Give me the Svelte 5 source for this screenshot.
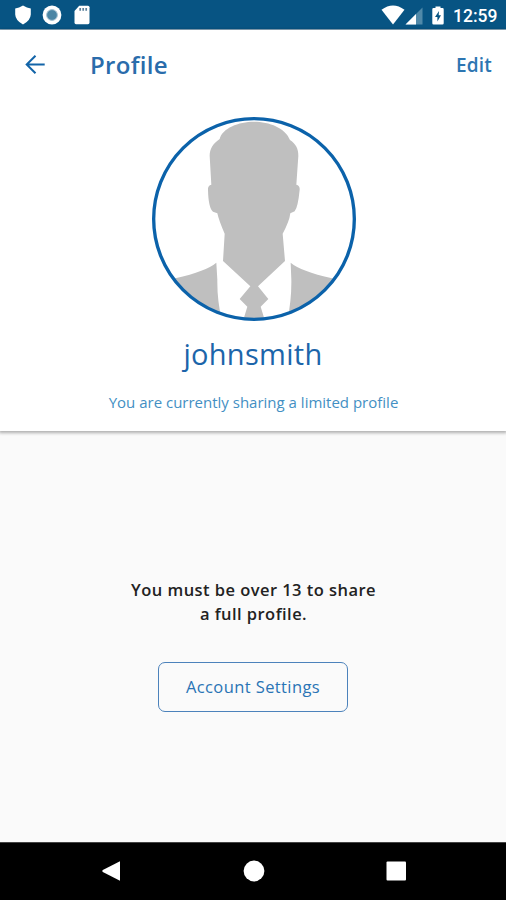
<script lang="ts">
  let username = 'johnsmith';
  let minAge = 13;
</script>

<div class="screen">
  <!-- Status bar -->
  <div class="status-bar">
    <svg class="shield" width="18" height="20" viewBox="0 0 18 20">
      <path d="M9 .5 Q13 3 16.8 3.4 V9.5 Q16.5 15.5 9 19.5 Q1.5 15.5 1.2 9.5 V3.4 Q5 3 9 .5Z" fill="#fff" />
    </svg>
    <svg class="sync" width="20" height="20" viewBox="0 0 20 20">
      <circle cx="10" cy="10" r="9.4" fill="#fff" />
      <circle cx="10" cy="10" r="5.4" fill="#4b86a5" stroke="#a5c2d2" stroke-width="1" />
    </svg>
    <svg class="sd-card" width="16" height="20" viewBox="0 0 16 20">
      <path d="M5.2 .8 H14 Q15.5 .8 15.5 2.3 V17.5 Q15.5 19.2 14 19.2 H2 Q.5 19.2 .5 17.5 V6Z" fill="#fff" />
      <path d="M6.2 3V5.8M9.2 3V5.8M12.2 3V5.8" stroke="#5b819b" stroke-width="1.7" />
    </svg>
    <svg class="wifi" width="24" height="20" viewBox="0 0 24 20">
      <path d="M.5 4.8 Q12 -3.7 23.5 4.8 L12 19.5Z" fill="#fff" />
    </svg>
    <svg class="signal" width="18" height="18" viewBox="0 0 18 18">
      <path d="M17.5 .5V17.5H.5Z" fill="#5089a9" />
      <path d="M11 7V17.5H.5Z" fill="#fff" />
    </svg>
    <svg class="battery" width="12" height="19" viewBox="0 0 12 19">
      <path d="M3.5 .5H8.5V2H10.5Q11.7 2 11.7 3.2V17.3Q11.7 18.5 10.5 18.5H1.5Q.3 18.5 .3 17.3V3.2Q.3 2 1.5 2H3.5Z" fill="#fff" />
      <path d="M7 5L3 11H5.4V15.5L9 9.3H6.7Z" fill="#075483" />
    </svg>
    <span class="clock">12:59</span>
  </div>

  <!-- Profile card -->
  <div class="card">
    <header class="toolbar">
      <button class="back" aria-label="Back">
        <svg width="22" height="22" viewBox="0 0 22 22">
          <path d="M20.7 10.5H3M11.5 1.7L2.7 10.5L11.5 19.3" fill="none" stroke="#1264a8" stroke-width="2" />
        </svg>
      </button>
      <h1>Profile</h1>
      <button class="edit">Edit</button>
    </header>

    <svg class="avatar" width="206" height="206" viewBox="23 19 618 618">
      <defs>
        <clipPath id="avatar-clip"><circle cx="332" cy="328" r="303" /></clipPath>
      </defs>
      <circle cx="332" cy="328" r="303" fill="#fff" />
      <g clip-path="url(#avatar-clip)" fill="#bfbfbf">
        <path d="M332 36C286 36 236 56 229 88C210 101 199 117 199 139L204 225Q193 227 194 240Q195 294 209 306L222 311Q227 334 244 372L239 454L321 530L289 568L312 591L294 650H370L352 591L375 568L344 530L425 454L418 372Q438 336 441 311L454 305Q464 292 469 240Q470 228 459 225L465 139C465 117 458 103 440 91C427 55 378 36 332 36Z" />
        <path d="M219 459Q190 484 96 506L20 530V650H240Q221 580 222 510Z" />
        <path d="M442 459Q471 484 566 506L645 530V650H428Q445 580 444 510Z" />
      </g>
      <circle cx="332" cy="328" r="301" fill="none" stroke="#0b62aa" stroke-width="10" />
    </svg>

    <div class="username">{username}</div>
    <div class="sharing">You are currently sharing a limited profile</div>
  </div>

  <!-- Age notice -->
  <main class="content">
    <p class="notice">You must be over {minAge} to share<br />a full profile.</p>
    <button class="settings">Account Settings</button>
  </main>

  <!-- System navigation -->
  <nav class="nav-bar">
    <svg width="22" height="22" viewBox="0 0 22 22">
      <path d="M19 1.2V20.8L1.8 12Q.6 11 1.8 10Z" fill="#fff" />
    </svg>
    <svg width="22" height="22" viewBox="0 0 22 22">
      <circle cx="11" cy="11" r="10.4" fill="#fff" />
    </svg>
    <svg width="22" height="22" viewBox="0 0 22 22">
      <rect x="1.5" y="1.5" width="19.5" height="19" rx="1" fill="#fff" />
    </svg>
  </nav>
</div>

<style>
  :global(body) {
    margin: 0;
  }
  .screen {
    display: flex;
    flex-direction: column;
    width: 506px;
    height: 900px;
    overflow: hidden;
    background: #fafafa;
    font-family: "Open Sans", sans-serif;
  }
  svg {
    display: block;
    flex: none;
  }
  button {
    padding: 0;
    border: 0;
    background: none;
    font-family: inherit;
    cursor: pointer;
  }
  .status-bar {
    display: flex;
    align-items: center;
    box-sizing: border-box;
    height: 30px;
    padding: 1px 8px 0 14px;
    border-bottom: 1px solid #8aa9bd;
    background: #075483;
  }
  .sync { margin-left: 10px; }
  .sd-card { margin-left: 12px; }
  .wifi { margin-left: auto; }
  .signal {
    margin-left: 0;
    margin-top: 1px;
  }
  .battery { margin-left: 9px; }
  .clock {
    width: 45px;
    margin-left: 9px;
    padding-top: 2px;
    color: #fff;
    font-family: Roboto, sans-serif;
    font-size: 17.5px;
    font-weight: 500;
    line-height: 20px;
    white-space: nowrap;
  }
  .card {
    display: flex;
    flex-direction: column;
    align-items: center;
    height: 401px;
    background: #fff;
    box-shadow: 0 1px 3px 1px rgba(0, 0, 0, 0.3);
    text-align: center;
  }
  .toolbar {
    display: flex;
    align-items: center;
    box-sizing: border-box;
    width: 100%;
    height: 70px;
    padding: 0 14px 0 24px;
  }
  h1 {
    margin: 0 auto 0 44px;
    color: #2a6cab;
    font-size: 24px;
    font-weight: 600;
    letter-spacing: 0.3px;
    line-height: 34px;
  }
  .edit {
    color: #2d76b2;
    font-size: 19px;
    font-weight: 600;
    letter-spacing: 0.2px;
  }
  .avatar { margin: 16px 0 0 1px; }
  .username {
    margin-top: 12px;
    color: #1c65aa;
    font-size: 29px;
    letter-spacing: 0.3px;
    line-height: 40px;
  }
  .sharing {
    margin: 16px 0 0 1px;
    color: #438fc3;
    font-size: 15px;
    line-height: 24px;
  }
  .content {
    display: flex;
    flex: 1;
    flex-direction: column;
    align-items: center;
  }
  .notice {
    margin: 147px 0 0 1px;
    color: #222;
    font-size: 16.5px;
    font-weight: 600;
    letter-spacing: 0.45px;
    line-height: 24px;
    text-align: center;
  }
  .settings {
    box-sizing: border-box;
    width: 190px;
    height: 50px;
    margin-top: 36px;
    padding-bottom: 2px;
    border: 1px solid #4c82bb;
    border-radius: 7px;
    color: #2974b5;
    font-size: 16.5px;
    letter-spacing: 0.4px;
  }
  .nav-bar {
    display: flex;
    align-items: center;
    justify-content: space-between;
    box-sizing: border-box;
    height: 58px;
    padding: 0 99px 2px 101px;
    border-top: 1px solid #444;
    background: #000;
  }
</style>
